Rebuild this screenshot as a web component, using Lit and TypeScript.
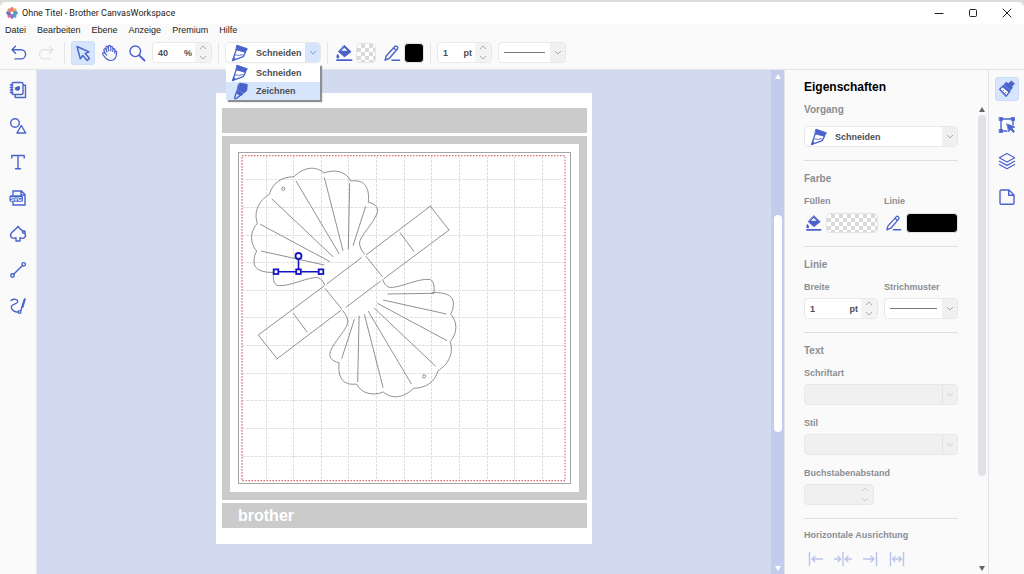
import { LitElement, html, svg, css, nothing, TemplateResult, SVGTemplateResult } from "lit";
import { customElement, property } from "lit/decorators.js";

const glyphs: Record<string, SVGTemplateResult> = {
  undo: svg`<path d="M6.500 3.200 3 6.700l3.500 3.500M3.200 6.700H12a4.600 4.600 0 0 1 0 9.200H6"/>`,
  redo: svg`<path d="M13.500 3.200 17 6.700l-3.500 3.500M16.800 6.700H8a4.600 4.600 0 0 0 0 9.200h6"/>`,
  pointer: svg`<path d="M4 3.500 7.300 15.800l2.500-3.300 4.300 5 2.400-2-4.300-5 3.800-1.700z"/>`,
  hand: svg`<path d="M5.200 10.500 4 7.200c-.5-1.500 1.300-2.100 1.900-.8L7 9M6.600 8 5.900 4.600c-.3-1.600 1.500-1.900 1.900-.5L8.800 8M8.300 5.500 8.600 3.300c.2-1.300 2-1.200 2 .2l.3 4.200M10.700 4.500c.3-1.500 2.100-1.300 2.100.2v3.800M12.800 6.400c.4-1.200 2-.9 2 .4v3.400M14.800 8.500c.6-.9 2-.4 1.900.8-.1 4-.9 8.200-6 8.200-3.600 0-5-2-6.800-4.600L2.700 11c-.6-1 .8-2 1.700-1.200l2.300 2.400" stroke-width="1.200"/>`,
  zoom: svg`<circle cx="8.300" cy="8.300" r="5.300"/><path d="m12.300 12.300 5.200 5.200" stroke-width="1.800"/>`,
  cutter: svg`<path d="M7.200 2.300 17.300 5.800 15.300 9.300 6.200 6.800z" fill="currentColor" stroke-width="1"/><path d="M6.300 6.800 2.400 17.600l10.900-3.900 2.200-4.400" stroke-width="1.300"/><path d="M4.300 12.700C6.500 10.700 8 13 9.800 12.300s2.200-.8 3.700-.1" stroke-width="1"/><path d="m2.400 17.600 1.700-4.400 1.600 3.200z" fill="currentColor" stroke="none"/>`,
  marker: svg`<path d="m10 2.200 7.200 1.200-.5 6.300-3 2.300-6.200-3.700.6-3.600z" fill="currentColor" stroke-width="1"/><path d="m7 9.300 5.700 3.500-1.900 1.500-4-2.400z" fill="currentColor"/><path d="M6.300 11.500 4.500 17.200l1.400.6 4.700-3.700"/>`,
  bucket: svg`<path d="m10.500 2.500 6.500 6.300-6.500 5-5.800-5z" fill="currentColor" stroke-width="1"/><path d="m10.300 4.800 3 2.900H7.200z" fill="#fff" stroke="none"/><path d="M3.800 10.800c-1.500 2-2 3.200-.8 4.500 1.500.8 2.700-.6 2.200-2z" fill="currentColor" stroke="none"/><path d="M3 17.200h14.500" stroke-width="1.800"/>`,
  pencil: svg`<path d="M3 17.200 4.200 13 13 3.300c1-1 3.600.8 2.600 2.400L7.200 15.500zM11.500 5l2.900 2.300"/><path d="M10 17.200h7.500" stroke-width="1.600"/>`,
  stamps: svg`<rect x="4" y="2.500" width="11" height="12" rx="1.500"/><path d="M15.500 5.300h2v12.200H7.200v-2.200M2.300 5h2.500M2.300 7.500h2.500M2.300 10h2.500M2.300 12.500h2.500"/><path d="M7 8c1-2 2-1 3-1.800 1.300-.8 2.300 0 2 1.500.4 1.500-.8 3.300-2.500 3C8 11 6.500 10 7 8z" fill="currentColor" stroke="none"/>`,
  shapes: svg`<circle cx="7" cy="7" r="4.300"/><path d="M13.300 9.500 17.700 17H8.900z"/>`,
  text: svg`<path d="M3.800 6V3.500h12.400V6M10 3.500v13M7.500 16.700h5"/>`,
  spade: svg`<path d="M10 2.500c1.500 2 2.800 3 4.700 4.500M16.700 9.200c2.300 3.600-1 6.400-4.700 4.500v3.300H8v-3.300c-3.700 1.900-7-.9-4.700-4.500C4.800 7 8 5.500 10 2.500"/><circle cx="15.800" cy="8" r="1.300"/>`,
  line: svg`<circle cx="4.500" cy="15.500" r="1.700"/><circle cx="15.700" cy="4.300" r="1.700"/><path d="m5.700 14.300 8.800-8.800"/>`,
  freehand: svg`<path d="M3 4.500c2.500-2 7.500-1.500 6.500 1.500C8.500 8.500 3.500 8 3.300 11c-.3 3 4 5.500 7.200 5"/><circle cx="11.500" cy="16" r="1.400"/><path d="M13 14.300 16.300 4"/><path d="M16.800 3.300 14.500 11" stroke-width="2"/>`,
  brush: svg`<path d="m14.800 2.200 2.600 2.600-2.900 2.900 1 1-2 2.200-6.300-5.600 2.100-2 1.800 1.300z" fill="currentColor" stroke-width="1"/><path d="M6.500 6.500 2.700 10.300l6.500 6.900 3.800-5.200z" fill="#fff"/><path d="M6.500 6.500 13 12.100l-1.300 1.500-6.500-5.700z" fill="currentColor" stroke="none"/><path d="m5.200 12.700 1.300-1.200M7.300 15l1.500-1.600" stroke-width="1"/>`,
  transform: svg`<path d="M4 4h12v6M4 4v12h6" /><path d="M2.500 2.500h3v3h-3zM14.500 2.500h3v3h-3zM2.500 14.500h3v3h-3z" fill="currentColor" stroke-width=".8"/><path d="m10 9 7.800 3-3 1 2.700 3.500-1.300 1-2.700-3.300-1.500 2.300z" fill="currentColor" stroke-width=".8"/>`,
  layers: svg`<path d="m10 2.500 7.700 4.200L10 11 2.300 6.700zM2.300 10.200l7.700 4.200 7.700-4.200M2.300 13.500l7.700 4.200 7.700-4.200" stroke-width="1.200"/>`,
  sheet: svg`<path d="M5 3h7l5 5v8a1.300 1.300 0 0 1-1.300 1.300H4.300A1.300 1.300 0 0 1 3 16V4.300A1.300 1.300 0 0 1 4.300 3zM11.700 3.300v5h5"/>`,
  alignLeft: svg`<path d="M3.500 3.500v13M6 10h10.500M9 7.200 6 10l3 2.800"/>`,
  alignCenter: svg`<path d="M10 3.500v13M1.500 10h6M5 7.200 7.700 10 5 12.800M18.500 10h-6M15 7.200 12.300 10l2.700 2.800"/>`,
  alignRight: svg`<path d="M16.500 3.500v13M3.500 10H14M11 7.200l3 2.800-3 2.800"/>`,
  alignJustify: svg`<path d="M3.500 3.500v13M16.500 3.500v13M5.500 10h9M8 7.500 5.500 10 8 12.500M12 7.500l2.500 2.500-2.500 2.500"/>`,
  minimize: svg`<path d="M6 10.500h8" stroke-width="1"/>`,
  maximize: svg`<rect x="6.500" y="6.500" width="7" height="7" rx="1" stroke-width="1"/>`,
  close: svg`<path d="m6 6 8 8M14 6l-8 8" stroke-width="1"/>`,
};

@customElement("app-icon")
export class AppIcon extends LitElement {
  @property() name = "";
  static styles = css`
    :host { display: block; width: 20px; height: 20px; flex: none; }
    .glyph { display: block; width: 100%; height: 100%; fill: none; stroke: currentColor; stroke-width: 1.4; stroke-linejoin: round; stroke-linecap: round; }
  `;
  render() {
    return html`<svg class="glyph" viewBox="0 0 20 20" aria-hidden="true">${glyphs[this.name]}</svg>`;
  }
}

const chevron = (up = false) => html`<svg class="chevron" viewBox="0 0 8 5" aria-hidden="true"><path d=${up ? "M1 4 4 1l3 3" : "M1 1l3 3 3-3"} /></svg>`;
const triangle = (up: boolean) => html`<svg class="triangle" viewBox="0 0 8 6" aria-hidden="true"><path d=${up ? "M4 1 7 6H1z" : "M4 6 1 1h6z"} /></svg>`;

@customElement("app-root")
export class AppRoot extends LitElement {
  static styles = css`
    :host { display: block; height: 100vh; overflow: hidden; background: #dcdcd8; font: 700 9px/12px "Liberation Sans", Arial, sans-serif; color: #4b4e54; --blue: #4a63cc; --pale: #d6e5fb; }
    * { box-sizing: border-box; }
    button, input, select { font: inherit; color: inherit; border: 0; margin: 0; padding: 0; background: none; min-width: 0; appearance: none; outline: 0; }
    .window { height: 100%; padding-top: 2px; display: flex; flex-direction: column; }
    .titlebar { flex: none; height: 22px; display: flex; align-items: center; background: #fff; border-radius: 6px 6px 0 0; padding-left: 6px; gap: 4px; color: #222; }
    .logo { width: 12px; height: 12px; }
    .title { flex: 1; margin: 0; font: 400 9px/12px Roboto, sans-serif; }
    .winbuttons { display: flex; color: #222; }
    .winbutton { width: 34px; height: 20px; display: grid; place-items: center; }
    .menubar { flex: none; height: 12px; background: #fafafa; display: flex; gap: 11px; padding-left: 5px; font-weight: 400; color: #1c1c1c; }
    .toolbar { flex: none; height: 34px; background: #fafafa; border-bottom: 1px solid #e2e4ea; display: flex; align-items: center; padding-left: 7px; }
    .group { display: flex; align-items: center; gap: 3px; }
    .wide { gap: 6px; }
    .pair { display: flex; align-items: center; gap: 3px; }
    .separator { width: 1px; height: 22px; margin: 0 6px; background: #e6e6e6; }
    .tool { width: 24px; height: 24px; display: grid; place-items: center; color: var(--blue); border-radius: 4px; }
    .tool[aria-pressed="true"] { background: var(--pale); box-shadow: inset 0 0 0 1px #cbddf8; }
    .tool:disabled { color: #e0e3ec; }
    .swatchtool { width: 19px; height: 20px; color: var(--blue); display: grid; place-items: center; }
    .swatch { height: 20px; width: 20px; border-radius: 4px; border: 1px solid #e4e4e4; }
    .clear { background: repeating-conic-gradient(#dadada 0 25%, #fff 0 50%) 0 0 / 8px 8px; }
    .black { background: #000; }
    .control { position: relative; height: 21px; display: flex; align-items: stretch; border: 1px solid #e8e8e8; border-radius: 4px; background: #fff; }
    .control.off { background: #f0f0f0; border-color: #e8e8e8; color: #c4c4c4; }
    .field { flex: 1; width: 0; padding-left: 5px; align-self: center; }
    .unit { align-self: center; padding-right: 3px; }
    .steps { width: 16px; display: flex; flex-direction: column; background: #f3f3f3; border-radius: 0 3px 3px 0; }
    .step { flex: 1; display: grid; place-items: center; }
    .off .steps { background: none; }
    .chevron { width: 8px; height: 5px; fill: none; stroke: #ababab; stroke-width: 1; display: block; }
    .off .chevron { stroke: #cfcfcf; }
    .lead { align-self: center; margin-left: 4px; color: var(--blue); }
    .choice { flex: 1; width: 0; padding-left: 6px; cursor: pointer; }
    .arrow { width: 15px; display: grid; place-items: center; background: #f0f0f0; border-radius: 0 3px 3px 0; pointer-events: none; }
    .off .arrow { border-left: 1px solid #e4e4e4; }
    .open .arrow { background: var(--pale); }
    .open .chevron { stroke: #7f9be0; }
    .stroke { align-self: center; flex: 1; height: 1px; margin: 0 5px; background: #777; }
    .pattern { flex: none; width: 0; }
    .zoombox { width: 60px; }
    .modebox { width: 96px; }
    .widthbox { width: 55px; }
    .linebox { width: 68px; }
    .menu { position: absolute; z-index: 5; top: 21px; left: 0; right: 0; margin: 0; padding: 0; list-style: none; background: #fff; box-shadow: 2px 2px 1px #8d8f95; }
    .option { height: 18px; display: flex; align-items: center; gap: 6px; padding-left: 4px; }
    .option[aria-selected="true"] { background: var(--pale); }
    .optionicon { color: var(--blue); }
    .workspace { flex: 1; min-height: 0; display: flex; background: #fafafa; }
    .rail { flex: none; width: 37px; display: flex; flex-direction: column; align-items: center; gap: 12px; padding-top: 8px; border-right: 1px solid #e4e6ec; }
    .right { width: 36px; padding-top: 7px; border-right: 0; border-left: 1px solid #e0e2ea; }
    .stage { flex: 1; min-width: 0; background: #d2daef; display: flex; justify-content: center; align-items: flex-start; padding-top: 23px; overflow: hidden; }
    .mat { width: 376px; flex: none; background: #fff; padding: 15px 5px 16px 6px; display: flex; flex-direction: column; gap: 3px; }
    .bar { height: 25px; background: #cbcbcb; display: flex; align-items: center; padding-left: 16px; font-size: 16px; color: #fff; }
    .frame { border: 8px solid #cbcbcb; padding: 8px; }
    .drawing { display: block; width: 100%; }
    .grid { stroke: #e0e0e0; stroke-dasharray: 3 1; fill: none; }
    .edge { stroke: #a4a4a4; fill: none; }
    .limit { stroke: #dc707a; stroke-width: 1.2; stroke-dasharray: 1.6 1.4; fill: none; }
    .cut { stroke: #757575; stroke-width: .8; fill: none; }
    .picked { stroke: #1414c4; stroke-width: 1.6; fill: none; }
    .handle { fill: #fff; stroke: #1414c4; stroke-width: 1.8; }
    .track { flex: none; display: flex; flex-direction: column; align-items: center; }
    .triangle { display: block; width: 8px; height: 6px; margin: 3px 0; }
    .stagetrack { width: 14px; background: #c3ccec; fill: #fff; border-right: 1px solid #e3e5ee; }
    .before { flex: 135; }
    .thumb { flex: 219; width: 8px; border-radius: 4px; background: #fff; }
    .after { flex: 132; }
    .panel { flex: none; width: 203px; display: flex; flex-direction: column; padding: 9px 0 0 19px; overflow: hidden; }
    .heading { margin: 0; font-size: 12px; line-height: 16px; color: #000; }
    .body { flex: 1; min-height: 0; display: flex; justify-content: space-between; }
    .sections { flex: none; width: 154px; padding-top: 7px; }
    .section { display: flex; flex-direction: column; gap: 8px; padding-bottom: 13px; color: #8a8e94; }
    .section + .section { border-top: 1px solid #dedede; padding-top: 10px; }
    .section .control:not(.off) { color: #4b4e54; }
    .subhead { margin: 0; font-size: 10px; line-height: 16px; }
    .columns { display: grid; grid-template-columns: 74px 74px; gap: 6px; }
    .item { display: flex; flex-direction: column; gap: 5px; }
    .item + .item { margin-top: 4px; }
    .columns .item + .item { margin-top: 0; }
    .narrow { width: 70px; }
    .sample { display: flex; align-items: center; gap: 3px; height: 21px; }
    .sample .swatch { width: auto; flex: 1; }
    .section .lead { color: var(--blue); }
    .aligns { display: flex; gap: 3px; }
    .align { width: 24px; height: 20px; display: grid; place-items: center; color: #b9c4ec; }
    .paneltrack { width: 12px; margin-top: 8px; fill: #666; }
    .paneltrack .thumb { flex: 364; background: #dfe0e8; }
    .paneltrack .after { flex: 87; }
  `;

  private tool(icon: string, label: string, pressed = false, disabled = false): TemplateResult {
    return html`<button class="tool" aria-label=${label} aria-pressed=${pressed ? "true" : nothing} ?disabled=${disabled}><app-icon name=${icon}></app-icon></button>`;
  }

  private number(id: string, size: string, value: string, unit: string, label: string | null, off = false): TemplateResult {
    return html`<div class="control ${size} ${off ? "off" : ""}">
      <input class="field" id=${id} .value=${value} aria-label=${label ?? nothing} ?disabled=${off} />
      ${unit ? html`<span class="unit">${unit}</span>` : nothing}
      <div class="steps">
        <button class="step" aria-label="+" ?disabled=${off}>${chevron(true)}</button>
        <button class="step" aria-label="-" ?disabled=${off}>${chevron()}</button>
      </div>
    </div>`;
  }

  private mode(size: string, label: string | null, id: string, menu = false): TemplateResult {
    return html`<div class="control ${size} ${menu ? "open" : ""}">
      <app-icon class="lead" name="cutter"></app-icon>
      <select class="choice" id=${id} aria-label=${label ?? nothing}><option>Schneiden</option><option>Zeichnen</option></select>
      <span class="arrow">${chevron()}</span>
      ${menu
        ? html`<ul class="menu" role="listbox">
            <li class="option" role="option" aria-selected="false"><app-icon class="optionicon" name="cutter"></app-icon>Schneiden</li>
            <li class="option" role="option" aria-selected="true"><app-icon class="optionicon" name="marker"></app-icon>Zeichnen</li>
          </ul>`
        : nothing}
    </div>`;
  }

  private pattern(size: string, id: string, label: string | null): TemplateResult {
    return html`<div class="control ${size}">
      <select class="pattern" id=${id} aria-label=${label ?? nothing}></select>
      <span class="stroke"></span><span class="arrow">${chevron()}</span>
    </div>`;
  }

  private empty(id: string): TemplateResult {
    return html`<div class="control off"><select class="choice" id=${id} disabled></select><span class="arrow">${chevron()}</span></div>`;
  }

  private half(withFirstRib: boolean): SVGTemplateResult {
    return svg`
      <path d="M275.500 272.300C263 273 254 270 254 262c0-5 1-8 2.700-11-7-8-7-19 .6-27.700-4-12 2-23 12-29C273 182 282 177 294 176.700c10-10 22-11 30-3.700 10-4 22-2 26.700 8 15-2 19 8 17.600 21.300C376 204 379 208 377 213.500 373 224 360 236 359.500 243c0 4 2.500 8 5.200 11.500M273.300 272.300v4c0 4 1 9 5 9.300 12 1 30-9 39.500-8 4 1 5.500 4.500 7.200 8"/>
      <circle cx="283.300" cy="188.700" r="1.600"/>
      <path d="m261 251 63.300 14M260.300 224.300 330 261.700M271.700 198.700l61.600 58.300M296 181l43.300 73M324.300 177.300 343 250.700M349.700 183l-1.400 66.300M365.700 206.300 353 245.700"/>
      ${withFirstRib ? svg`<path d="m273.400 271.700 46.600-.7"/>` : nothing}
      <path d="M324 286 258.300 335l19 24M326.700 284l35-26.500M366 255l65-49.300M325 288.300 341.700 309M293.300 313.300l14 19"/>`;
  }

  private drawing(): TemplateResult {
    const lines = Array.from({ length: 11 }, (_, i) => i);
    return html`<svg class="drawing" viewBox="238 152 333 332" role="img" aria-label="Ohne Titel">
      ${lines.map((i) => svg`<path class="grid" d="M${Math.round(265.500 + i * 27.650) + 0.5} 156v325M242 ${Math.round(179.200 + i * 27.650) + 0.5}h323"/>`)}
      <rect class="edge" x="238.500" y="152.500" width="332" height="331"/>
      <rect class="limit" x="242" y="155.700" width="323" height="325"/>
      <g class="cut">${this.half(false)}</g>
      <g class="cut" transform="rotate(180 353.700 282.500)">${this.half(true)}</g>
      <path class="picked" d="M276 271.700h45M298.500 259v12"/>
      <circle class="handle" cx="298.500" cy="256" r="3"/>
      ${[276, 298.500, 321].map((x) => svg`<rect class="handle" x=${x - 2.300} y="269.400" width="4.600" height="4.600"/>`)}
    </svg>`;
  }

  render() {
    const petals = ["#e8756a", "#f0a45c", "#5a8fd8", "#45b0d0", "#8c6cc4", "#d86a9c", "#4f74cc", "#e58a78"];
    return html`<div class="window">
      <header class="titlebar">
        <svg class="logo" viewBox="0 0 12 12" aria-hidden="true">
          ${petals.map((c, i) => svg`<ellipse cx="6" cy="2.800" rx="1.900" ry="2.700" fill=${c} transform="rotate(${i * 45} 6 6)"/>`)}
          <circle cx="6" cy="6" r="1.300" fill="#fff"/>
        </svg>
        <h1 class="title">Ohne Titel - Brother CanvasWorkspace</h1>
        <div class="winbuttons">
          ${["minimize", "maximize", "close"].map((n) => html`<button class="winbutton" aria-label=${n}><app-icon name=${n}></app-icon></button>`)}
        </div>
      </header>
      <nav class="menubar">${["Datei", "Bearbeiten", "Ebene", "Anzeige", "Premium", "Hilfe"].map((t) => html`<button class="entry">${t}</button>`)}</nav>
      <div class="toolbar">
        <div class="group">${this.tool("undo", "Rückgängig")}${this.tool("redo", "Wiederholen", false, true)}</div>
        <span class="separator"></span>
        <div class="group">
          ${this.tool("pointer", "Auswählen", true)}${this.tool("hand", "Verschieben")}${this.tool("zoom", "Zoom")}
          ${this.number("zoom", "zoombox", "40", "%", "Zoom")}
        </div>
        <span class="separator"></span>
        ${this.mode("modebox", "Vorgang", "mode", true)}
        <span class="separator"></span>
        <div class="group wide">
          <div class="pair"><button class="swatchtool" aria-label="Füllen"><app-icon name="bucket"></app-icon></button><button class="swatch clear" aria-label="Füllfarbe"></button></div>
          <div class="pair"><button class="swatchtool" aria-label="Linie"><app-icon name="pencil"></app-icon></button><button class="swatch black" aria-label="Linienfarbe"></button></div>
        </div>
        <span class="separator"></span>
        <div class="group wide">${this.number("stroke", "widthbox", "1", "pt", "Breite")}${this.pattern("linebox", "line", "Strichmuster")}</div>
      </div>
      <div class="workspace">
        <nav class="rail">
          ${[["stamps", "Muster"], ["shapes", "Formen"], ["text", "Text"]].map(([i, l]) => this.tool(i, l))}
          <button class="tool" aria-label="SVG">
            <svg viewBox="0 0 20 20" width="20" height="20" fill="none" stroke="currentColor" stroke-width="1.400">
              <path d="M5 7V3h8.500L17 6.500V17H5v-3M13 3v4h4"/>
              <rect x="1.500" y="7.200" width="13.500" height="6.600" rx="1.500" fill="currentColor" stroke="none"/>
              <text x="8.200" y="12.500" font-size="5.500" text-anchor="middle" fill="#fff" stroke="none">SVG</text>
            </svg>
          </button>
          ${[["spade", "Pfad"], ["line", "Gerade"], ["freehand", "Freihand"]].map(([i, l]) => this.tool(i, l))}
        </nav>
        <main class="stage">
          <div class="mat">
            <div class="bar"></div>
            <div class="frame">${this.drawing()}</div>
            <div class="bar">brother</div>
          </div>
        </main>
        <div class="track stagetrack">${triangle(true)}<span class="before"></span><span class="thumb"></span><span class="after"></span>${triangle(false)}</div>
        <aside class="panel">
          <h2 class="heading">Eigenschaften</h2>
          <div class="body">
            <div class="sections">
              <section class="section"><h3 class="subhead"><label for="operation">Vorgang</label></h3>${this.mode("", null, "operation")}</section>
              <section class="section">
                <h3 class="subhead">Farbe</h3>
                <div class="columns">
                  <div class="item"><label for="fill">Füllen</label><div class="sample"><app-icon class="swatchtool" name="bucket"></app-icon><button class="swatch clear" id="fill"></button></div></div>
                  <div class="item"><label for="outline">Linie</label><div class="sample"><app-icon class="swatchtool" name="pencil"></app-icon><button class="swatch black" id="outline"></button></div></div>
                </div>
              </section>
              <section class="section">
                <h3 class="subhead">Linie</h3>
                <div class="columns">
                  <div class="item"><label for="width">Breite</label>${this.number("width", "", "1", "pt", null)}</div>
                  <div class="item"><label for="dash">Strichmuster</label>${this.pattern("", "dash", null)}</div>
                </div>
              </section>
              <section class="section">
                <h3 class="subhead">Text</h3>
                <div class="item"><label for="font">Schriftart</label>${this.empty("font")}</div>
                <div class="item"><label for="style">Stil</label>${this.empty("style")}</div>
                <div class="item"><label for="spacing">Buchstabenabstand</label>${this.number("spacing", "narrow", "", "", null, true)}</div>
              </section>
              <section class="section">
                <span>Horizontale Ausrichtung</span>
                <div class="aligns">${[["alignLeft", "Links"], ["alignCenter", "Zentriert"], ["alignRight", "Rechts"], ["alignJustify", "Blocksatz"]].map(([i, l]) => html`<button class="align" aria-label=${l} disabled><app-icon name=${i}></app-icon></button>`)}</div>
              </section>
            </div>
            <div class="track paneltrack">${triangle(true)}<span class="thumb"></span><span class="after"></span>${triangle(false)}</div>
          </div>
        </aside>
        <nav class="rail right">
          ${this.tool("brush", "Eigenschaften", true)}${this.tool("transform", "Bearbeiten")}${this.tool("layers", "Ebenen")}${this.tool("sheet", "Projekt")}
        </nav>
      </div>
    </div>`;
  }
}
